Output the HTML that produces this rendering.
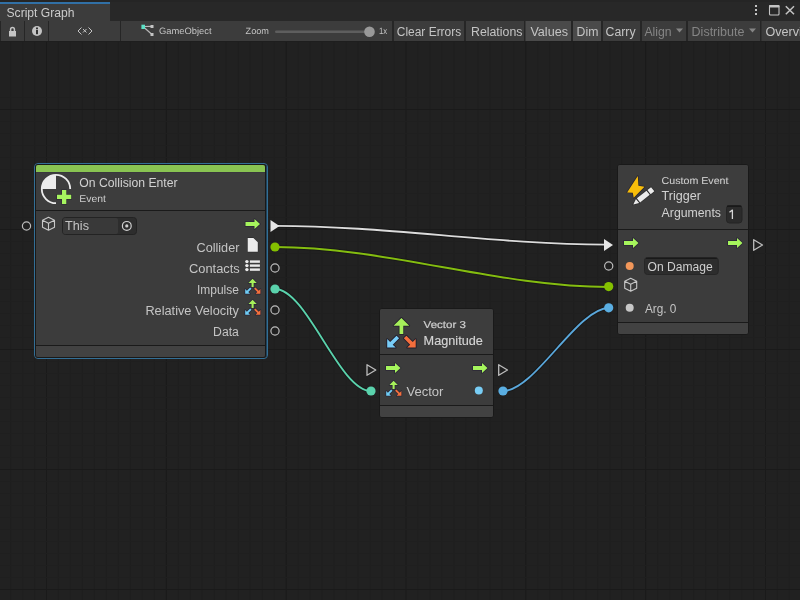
<!DOCTYPE html>
<html><head><meta charset="utf-8"><title>Script Graph</title>
<style>
*{margin:0;padding:0;box-sizing:border-box}
html,body{width:800px;height:600px;overflow:hidden;background:#222;font-family:"Liberation Sans", sans-serif}
#root{position:absolute;left:0;top:0;width:800px;height:600px;overflow:hidden;background:#222;will-change:transform}
.a{position:absolute}
#canvas{position:absolute;left:0;top:42px;width:800px;height:558px;background-color:#212121}
svg text{font-family:"Liberation Sans", sans-serif}
</style></head><body>
<div id="root">
<div id="canvas"><svg class="a" style="left:0;top:0" width="800" height="558"><rect x="10.05" y="0" width="1" height="558" fill="#1f1f1f"/>
<rect x="22.03" y="0" width="1" height="558" fill="#1f1f1f"/>
<rect x="34.02" y="0" width="1" height="558" fill="#1f1f1f"/>
<rect x="46.0" y="0" width="1" height="558" fill="#1a1a1a"/>
<rect x="57.98" y="0" width="1" height="558" fill="#1f1f1f"/>
<rect x="69.97" y="0" width="1" height="558" fill="#1f1f1f"/>
<rect x="81.95" y="0" width="1" height="558" fill="#1f1f1f"/>
<rect x="93.93" y="0" width="1" height="558" fill="#1f1f1f"/>
<rect x="105.92" y="0" width="1" height="558" fill="#1f1f1f"/>
<rect x="117.9" y="0" width="1" height="558" fill="#1f1f1f"/>
<rect x="129.88" y="0" width="1" height="558" fill="#1f1f1f"/>
<rect x="141.87" y="0" width="1" height="558" fill="#1f1f1f"/>
<rect x="153.85" y="0" width="1" height="558" fill="#1f1f1f"/>
<rect x="165.83" y="0" width="1" height="558" fill="#1a1a1a"/>
<rect x="177.82" y="0" width="1" height="558" fill="#1f1f1f"/>
<rect x="189.8" y="0" width="1" height="558" fill="#1f1f1f"/>
<rect x="201.78" y="0" width="1" height="558" fill="#1f1f1f"/>
<rect x="213.77" y="0" width="1" height="558" fill="#1f1f1f"/>
<rect x="225.75" y="0" width="1" height="558" fill="#1f1f1f"/>
<rect x="237.73" y="0" width="1" height="558" fill="#1f1f1f"/>
<rect x="249.72" y="0" width="1" height="558" fill="#1f1f1f"/>
<rect x="261.7" y="0" width="1" height="558" fill="#1f1f1f"/>
<rect x="273.68" y="0" width="1" height="558" fill="#1f1f1f"/>
<rect x="285.67" y="0" width="1" height="558" fill="#1a1a1a"/>
<rect x="297.65" y="0" width="1" height="558" fill="#1f1f1f"/>
<rect x="309.63" y="0" width="1" height="558" fill="#1f1f1f"/>
<rect x="321.62" y="0" width="1" height="558" fill="#1f1f1f"/>
<rect x="333.6" y="0" width="1" height="558" fill="#1f1f1f"/>
<rect x="345.58" y="0" width="1" height="558" fill="#1f1f1f"/>
<rect x="357.57" y="0" width="1" height="558" fill="#1f1f1f"/>
<rect x="369.55" y="0" width="1" height="558" fill="#1f1f1f"/>
<rect x="381.53" y="0" width="1" height="558" fill="#1f1f1f"/>
<rect x="393.52" y="0" width="1" height="558" fill="#1f1f1f"/>
<rect x="405.5" y="0" width="1" height="558" fill="#1a1a1a"/>
<rect x="417.48" y="0" width="1" height="558" fill="#1f1f1f"/>
<rect x="429.47" y="0" width="1" height="558" fill="#1f1f1f"/>
<rect x="441.45" y="0" width="1" height="558" fill="#1f1f1f"/>
<rect x="453.43" y="0" width="1" height="558" fill="#1f1f1f"/>
<rect x="465.42" y="0" width="1" height="558" fill="#1f1f1f"/>
<rect x="477.4" y="0" width="1" height="558" fill="#1f1f1f"/>
<rect x="489.38" y="0" width="1" height="558" fill="#1f1f1f"/>
<rect x="501.37" y="0" width="1" height="558" fill="#1f1f1f"/>
<rect x="513.35" y="0" width="1" height="558" fill="#1f1f1f"/>
<rect x="525.33" y="0" width="1" height="558" fill="#1a1a1a"/>
<rect x="537.32" y="0" width="1" height="558" fill="#1f1f1f"/>
<rect x="549.3" y="0" width="1" height="558" fill="#1f1f1f"/>
<rect x="561.28" y="0" width="1" height="558" fill="#1f1f1f"/>
<rect x="573.27" y="0" width="1" height="558" fill="#1f1f1f"/>
<rect x="585.25" y="0" width="1" height="558" fill="#1f1f1f"/>
<rect x="597.23" y="0" width="1" height="558" fill="#1f1f1f"/>
<rect x="609.22" y="0" width="1" height="558" fill="#1f1f1f"/>
<rect x="621.2" y="0" width="1" height="558" fill="#1f1f1f"/>
<rect x="633.18" y="0" width="1" height="558" fill="#1f1f1f"/>
<rect x="645.17" y="0" width="1" height="558" fill="#1a1a1a"/>
<rect x="657.15" y="0" width="1" height="558" fill="#1f1f1f"/>
<rect x="669.13" y="0" width="1" height="558" fill="#1f1f1f"/>
<rect x="681.12" y="0" width="1" height="558" fill="#1f1f1f"/>
<rect x="693.1" y="0" width="1" height="558" fill="#1f1f1f"/>
<rect x="705.08" y="0" width="1" height="558" fill="#1f1f1f"/>
<rect x="717.07" y="0" width="1" height="558" fill="#1f1f1f"/>
<rect x="729.05" y="0" width="1" height="558" fill="#1f1f1f"/>
<rect x="741.03" y="0" width="1" height="558" fill="#1f1f1f"/>
<rect x="753.02" y="0" width="1" height="558" fill="#1f1f1f"/>
<rect x="765.0" y="0" width="1" height="558" fill="#1a1a1a"/>
<rect x="776.98" y="0" width="1" height="558" fill="#1f1f1f"/>
<rect x="788.97" y="0" width="1" height="558" fill="#1f1f1f"/>
<rect x="0" y="55" width="800" height="1" fill="#1f1f1f"/>
<rect x="0" y="67" width="800" height="1" fill="#1a1a1a"/>
<rect x="0" y="79" width="800" height="1" fill="#1f1f1f"/>
<rect x="0" y="91" width="800" height="1" fill="#1f1f1f"/>
<rect x="0" y="103" width="800" height="1" fill="#1f1f1f"/>
<rect x="0" y="115" width="800" height="1" fill="#1f1f1f"/>
<rect x="0" y="127" width="800" height="1" fill="#1f1f1f"/>
<rect x="0" y="139" width="800" height="1" fill="#1f1f1f"/>
<rect x="0" y="151" width="800" height="1" fill="#1f1f1f"/>
<rect x="0" y="163" width="800" height="1" fill="#1f1f1f"/>
<rect x="0" y="175" width="800" height="1" fill="#1f1f1f"/>
<rect x="0" y="187" width="800" height="1" fill="#1a1a1a"/>
<rect x="0" y="199" width="800" height="1" fill="#1f1f1f"/>
<rect x="0" y="211" width="800" height="1" fill="#1f1f1f"/>
<rect x="0" y="223" width="800" height="1" fill="#1f1f1f"/>
<rect x="0" y="235" width="800" height="1" fill="#1f1f1f"/>
<rect x="0" y="247" width="800" height="1" fill="#1f1f1f"/>
<rect x="0" y="259" width="800" height="1" fill="#1f1f1f"/>
<rect x="0" y="271" width="800" height="1" fill="#1f1f1f"/>
<rect x="0" y="283" width="800" height="1" fill="#1f1f1f"/>
<rect x="0" y="295" width="800" height="1" fill="#1f1f1f"/>
<rect x="0" y="307" width="800" height="1" fill="#1a1a1a"/>
<rect x="0" y="319" width="800" height="1" fill="#1f1f1f"/>
<rect x="0" y="331" width="800" height="1" fill="#1f1f1f"/>
<rect x="0" y="343" width="800" height="1" fill="#1f1f1f"/>
<rect x="0" y="355" width="800" height="1" fill="#1f1f1f"/>
<rect x="0" y="367" width="800" height="1" fill="#1f1f1f"/>
<rect x="0" y="379" width="800" height="1" fill="#1f1f1f"/>
<rect x="0" y="391" width="800" height="1" fill="#1f1f1f"/>
<rect x="0" y="403" width="800" height="1" fill="#1f1f1f"/>
<rect x="0" y="415" width="800" height="1" fill="#1f1f1f"/>
<rect x="0" y="427" width="800" height="1" fill="#1a1a1a"/>
<rect x="0" y="439" width="800" height="1" fill="#1f1f1f"/>
<rect x="0" y="451" width="800" height="1" fill="#1f1f1f"/>
<rect x="0" y="463" width="800" height="1" fill="#1f1f1f"/>
<rect x="0" y="475" width="800" height="1" fill="#1f1f1f"/>
<rect x="0" y="487" width="800" height="1" fill="#1f1f1f"/>
<rect x="0" y="499" width="800" height="1" fill="#1f1f1f"/>
<rect x="0" y="511" width="800" height="1" fill="#1f1f1f"/>
<rect x="0" y="523" width="800" height="1" fill="#1f1f1f"/>
<rect x="0" y="535" width="800" height="1" fill="#1f1f1f"/>
<rect x="0" y="547" width="800" height="1" fill="#1a1a1a"/></svg></div>
<svg class="a" style="left:0;top:0" width="800" height="42" viewBox="0 0 800 42">
<rect x="0" y="0" width="800" height="21" fill="#282828"/>
<rect x="0" y="0" width="800" height="2" fill="#252525"/>
<rect x="0" y="2" width="110" height="19" fill="#3c3c3c"/>
<rect x="0" y="2" width="110" height="2" fill="#3170a6"/>
<text x="6.5" y="17" font-size="12" fill="#cbcbcb" textLength="68" lengthAdjust="spacingAndGlyphs">Script Graph</text>
<rect x="755" y="5" width="2" height="2" fill="#c4c4c4"/><rect x="755" y="9" width="2" height="2" fill="#c4c4c4"/><rect x="755" y="13" width="2" height="2" fill="#c4c4c4"/>
<rect x="769.5" y="5.5" width="9.5" height="9.5" rx="1" fill="none" stroke="#c4c4c4" stroke-width="1.1"/><rect x="769" y="5" width="10.5" height="2.6" rx="0.8" fill="#c4c4c4"/>
<path d="M785.8 6.2 L794 14.2 M794 6.2 L785.8 14.2" stroke="#c4c4c4" stroke-width="1.5"/>
<rect x="0" y="21" width="800" height="20" fill="#3c3c3c"/>
<rect x="0" y="41" width="800" height="1" fill="#1e1e1e"/>
<rect x="525" y="21" width="46" height="20" fill="#4a4a4a"/>
<rect x="573" y="21" width="28" height="20" fill="#4a4a4a"/>
<rect x="0" y="21" width="1" height="20" fill="#262626"/>
<rect x="24" y="21" width="1" height="20" fill="#262626"/>
<rect x="48" y="21" width="1" height="20" fill="#262626"/>
<rect x="120" y="21" width="1" height="20" fill="#262626"/>
<rect x="392" y="21" width="2" height="20" fill="#262626"/>
<rect x="464" y="21" width="2" height="20" fill="#262626"/>
<rect x="524" y="21" width="1.5" height="20" fill="#262626"/>
<rect x="571" y="21" width="2" height="20" fill="#262626"/>
<rect x="601" y="21" width="2" height="20" fill="#262626"/>
<rect x="640" y="21" width="2" height="20" fill="#262626"/>
<rect x="686" y="21" width="2" height="20" fill="#262626"/>
<rect x="760" y="21" width="1.5" height="20" fill="#262626"/>
<rect x="9" y="31" width="7" height="5.5" fill="#c4c4c4"/>
<path d="M10.6 31.5 V29.3 A1.9 1.9 0 0 1 14.4 29.3 V31.5" fill="none" stroke="#c4c4c4" stroke-width="1.5"/>
<circle cx="37" cy="31" r="5" fill="#c4c4c4"/><rect x="36" y="27.5" width="2" height="1.6" fill="#333"/><rect x="36" y="29.8" width="2" height="4.4" fill="#333"/>
<path d="M81.5 27.5 L78 31 L81.5 34.5 M88.5 27.5 L92 31 L88.5 34.5 M83 29 L86.5 32.5 M86.5 29 L83 32.5" fill="none" stroke="#c4c4c4" stroke-width="1"/>
<path d="M143 26.5 L152 26.3 M143 26.5 L152 34.5" stroke="#b8b8b8" stroke-width="1.2"/>
<rect x="150.5" y="25" width="3" height="3" fill="#c4c4c4"/><rect x="150.5" y="33" width="3" height="3" fill="#c4c4c4"/>
<rect x="141.4" y="24.7" width="3.6" height="4.3" fill="#5de0c6"/>
<text x="159" y="34" font-size="9.2" fill="#c4c4c4" text-rendering="geometricPrecision" textLength="52.6" lengthAdjust="spacingAndGlyphs">GameObject</text>
<text x="245.6" y="34" font-size="9.2" fill="#c4c4c4" text-rendering="geometricPrecision" textLength="23.4" lengthAdjust="spacingAndGlyphs">Zoom</text>
<rect x="275" y="30.5" width="93" height="2.6" rx="1.3" fill="#5e5e5e"/>
<circle cx="369.5" cy="31.8" r="5.3" fill="#999"/>
<text x="379" y="34" font-size="9.2" fill="#c4c4c4" text-rendering="geometricPrecision" textLength="8.2" lengthAdjust="spacingAndGlyphs">1x</text>
<text x="396.8" y="36" font-size="12" fill="#c4c4c4" textLength="64.4" lengthAdjust="spacingAndGlyphs">Clear Errors</text>
<text x="471" y="36" font-size="12" fill="#c4c4c4" textLength="51.4" lengthAdjust="spacingAndGlyphs">Relations</text>
<text x="530.4" y="36" font-size="12" fill="#c4c4c4" textLength="37.6" lengthAdjust="spacingAndGlyphs">Values</text>
<text x="576.6" y="36" font-size="12" fill="#c4c4c4" textLength="21.8" lengthAdjust="spacingAndGlyphs">Dim</text>
<text x="605.6" y="36" font-size="12" fill="#c4c4c4" textLength="30" lengthAdjust="spacingAndGlyphs">Carry</text>
<text x="644.4" y="36" font-size="12" fill="#858585" textLength="27.2" lengthAdjust="spacingAndGlyphs">Align</text>
<text x="691.6" y="36" font-size="12" fill="#858585" textLength="52.8" lengthAdjust="spacingAndGlyphs">Distribute</text>
<text x="765.5" y="36" font-size="12" fill="#c4c4c4" textLength="52.4" lengthAdjust="spacingAndGlyphs">Overview</text>
<path d="M676 28.5 L683 28.5 L679.5 32.5 Z" fill="#858585"/><path d="M749 28.5 L756 28.5 L752.5 32.5 Z" fill="#858585"/>
</svg>
<div class="a" style="left:34px;top:163px;width:234px;height:196px;border:1px solid #336f96;border-radius:4px"></div><div class="a" style="left:266px;top:166px;width:1px;height:190px;background:#21435a"></div><div class="a" style="left:35px;top:164px;width:231px;height:194px;background:#3c3c3c;border:1px solid #191919;border-radius:3px;overflow:hidden"><div class="a" style="left:0;top:0;width:100%;height:45px;background:#3d3d3d"></div><div class="a" style="left:0;top:45px;width:100%;height:1px;background:#1a1a1a"></div><div class="a" style="left:0;top:180px;width:100%;height:1px;background:#1a1a1a"></div><div class="a" style="left:0;top:181px;width:100%;height:11px;background:#424242"></div><div class="a" style="left:0;top:0;width:100%;height:7px;background:#89c452"></div><div class="a" style="left:0;top:7px;width:100%;height:1px;background:#39383d"></div></div>
<div class="a" style="left:617px;top:164px;width:132px;height:171px;background:#3c3c3c;border:1px solid #191919;border-radius:3px;overflow:hidden"><div class="a" style="left:0;top:0;width:100%;height:64px;background:#3d3d3d"></div><div class="a" style="left:0;top:64px;width:100%;height:1px;background:#1a1a1a"></div><div class="a" style="left:0;top:157px;width:100%;height:1px;background:#1a1a1a"></div><div class="a" style="left:0;top:158px;width:100%;height:11px;background:#424242"></div></div>
<div class="a" style="left:379px;top:308px;width:115px;height:110px;background:#3c3c3c;border:1px solid #191919;border-radius:3px;overflow:hidden"><div class="a" style="left:0;top:0;width:100%;height:45px;background:#3d3d3d"></div><div class="a" style="left:0;top:45px;width:100%;height:1px;background:#1a1a1a"></div><div class="a" style="left:0;top:96px;width:100%;height:1px;background:#1a1a1a"></div><div class="a" style="left:0;top:97px;width:100%;height:11px;background:#424242"></div></div>
<svg class="a" style="left:0;top:0" width="800" height="600" viewBox="0 0 800 600">
<path d="M276 225.8 C386 225.8 496 244.6 606 244.6" fill="none" stroke="#151515" stroke-opacity="0.7" stroke-width="3.8"/><path d="M276 225.8 C386 225.8 496 244.6 606 244.6" fill="none" stroke="#dcdcdc" stroke-width="1.8"/>
<path d="M275 247 C385 247 499 287 609 287" fill="none" stroke="#151515" stroke-opacity="0.7" stroke-width="3.8"/><path d="M275 247 C385 247 499 287 609 287" fill="none" stroke="#84bd10" stroke-width="1.8"/>
<path d="M275 289 C307 289 339 391 371 391" fill="none" stroke="#151515" stroke-opacity="0.7" stroke-width="3.8"/><path d="M275 289 C307 289 339 391 371 391" fill="none" stroke="#5ad2ac" stroke-width="1.8"/>
<path d="M503 391 C535 391 577 308 609 308" fill="none" stroke="#151515" stroke-opacity="0.7" stroke-width="3.8"/><path d="M503 391 C535 391 577 308 609 308" fill="none" stroke="#5aa8dc" stroke-width="1.8"/>
<path d="M56 189 V174.9 A14.1 14.1 0 0 0 41.9 189 Z" fill="#ececec"/>
<path d="M70.2 189 A14.2 14.2 0 1 0 56 203.2" fill="none" stroke="#ececec" stroke-width="1.8"/>
<path d="M62 190 H66.3 V194.8 H71.2 V198.9 H66.3 V204 H62 V198.9 H57 V194.8 H62 Z" fill="#a6f55f" stroke="#2f2f33" stroke-width="1.5" paint-order="stroke"/>
<text x="79.3" y="187" font-size="12" fill="#d2d2d2" textLength="98.3" lengthAdjust="spacingAndGlyphs">On Collision Enter</text>
<text x="79.3" y="201.9" font-size="10" fill="#cccccc" text-rendering="geometricPrecision" textLength="26.7" lengthAdjust="spacingAndGlyphs">Event</text>
<circle cx="26.5" cy="226" r="4.1" fill="none" stroke="#bdbdbd" stroke-width="1.2"/>
<path d="M48.5 217.3 L54.5 220.3 L54.5 227.3 L48.5 230.3 L42.5 227.3 L42.5 220.3 Z M42.5 220.3 L48.5 223.3 L54.5 220.3 M48.5 223.3 V230.3" fill="none" stroke="#c8c8c8" stroke-width="1.1" stroke-linejoin="round"/>
<rect x="62.5" y="217.5" width="74" height="17" rx="3" fill="#2d2d2d" stroke="#232323" stroke-width="1"/>
<rect x="63" y="218" width="55" height="16" rx="2" fill="#393939"/>
<circle cx="126.8" cy="225.9" r="4.4" fill="none" stroke="#d0d0d0" stroke-width="1.2"/><circle cx="126.8" cy="225.9" r="1.6" fill="#d0d0d0"/>
<text x="65.1" y="230" font-size="12" fill="#c4c4c4" textLength="23.9" lengthAdjust="spacingAndGlyphs">This</text>
<path d="M245.5 222 H254.5 V219 L260.0 224 L254.5 229 V226 H245.5 Z" fill="#a6f55c" stroke="#2a2636" stroke-width="1.6" paint-order="stroke" stroke-linejoin="round"/>
<path d="M270.5 220 L279.5 226 L270.5 232 Z" fill="#e6e6e6"/>
<text x="239.4" y="252" font-size="12" fill="#c4c4c4" text-anchor="end" textLength="42.9" lengthAdjust="spacingAndGlyphs">Collider</text>
<path d="M247.7 237.9 H253.4 L257.8 242.2 V251.8 H247.7 Z" fill="#ececec" stroke="#2a2a2a" stroke-width="1" paint-order="stroke"/>
<circle cx="275" cy="247" r="4.6" fill="#84c000"/>
<text x="239.8" y="273" font-size="12" fill="#c4c4c4" text-anchor="end" textLength="50.8" lengthAdjust="spacingAndGlyphs">Contacts</text>
<g fill="#ececec"><circle cx="246.9" cy="261.6" r="1.7"/><circle cx="246.9" cy="265.6" r="1.7"/><circle cx="246.9" cy="269.6" r="1.7"/><rect x="249.9" y="260.4" width="10" height="2.4"/><rect x="249.9" y="264.4" width="10" height="2.4"/><rect x="249.9" y="268.4" width="10" height="2.4"/></g>
<circle cx="275" cy="268" r="4.1" fill="none" stroke="#bdbdbd" stroke-width="1.2"/>
<text x="238.9" y="294" font-size="12" fill="#c4c4c4" text-anchor="end" textLength="41.9" lengthAdjust="spacingAndGlyphs">Impulse</text>
<path transform="translate(252.6,278.8) rotate(-90)" d="M0 0 L-4.2 -4.2 V-1.05 H-8.1 V1.05 H-4.2 V4.2 Z" fill="#a6f05a" stroke="#2a2636" stroke-width="1.4" paint-order="stroke" stroke-linejoin="round"/><path transform="translate(245.2,293.8) rotate(135)" d="M0 0 L-3.4 -3.4 V-1.0 H-8.0 V1.0 H-3.4 V3.4 Z" fill="#6fcdf5" stroke="#2a2636" stroke-width="1.4" paint-order="stroke" stroke-linejoin="round"/><path transform="translate(260.4,293.8) rotate(45)" d="M0 0 L-3.4 -3.4 V-1.0 H-8.0 V1.0 H-3.4 V3.4 Z" fill="#f4703c" stroke="#2a2636" stroke-width="1.4" paint-order="stroke" stroke-linejoin="round"/>
<circle cx="275" cy="289" r="4.6" fill="#5ad2ac"/>
<text x="238.9" y="315" font-size="12" fill="#c4c4c4" text-anchor="end" textLength="93.5" lengthAdjust="spacingAndGlyphs">Relative Velocity</text>
<path transform="translate(252.6,299.8) rotate(-90)" d="M0 0 L-4.2 -4.2 V-1.05 H-8.1 V1.05 H-4.2 V4.2 Z" fill="#a6f05a" stroke="#2a2636" stroke-width="1.4" paint-order="stroke" stroke-linejoin="round"/><path transform="translate(245.2,314.8) rotate(135)" d="M0 0 L-3.4 -3.4 V-1.0 H-8.0 V1.0 H-3.4 V3.4 Z" fill="#6fcdf5" stroke="#2a2636" stroke-width="1.4" paint-order="stroke" stroke-linejoin="round"/><path transform="translate(260.4,314.8) rotate(45)" d="M0 0 L-3.4 -3.4 V-1.0 H-8.0 V1.0 H-3.4 V3.4 Z" fill="#f4703c" stroke="#2a2636" stroke-width="1.4" paint-order="stroke" stroke-linejoin="round"/>
<circle cx="275" cy="310" r="4.1" fill="none" stroke="#bdbdbd" stroke-width="1.2"/>
<text x="238.9" y="336" font-size="12" fill="#c4c4c4" text-anchor="end" textLength="25.8" lengthAdjust="spacingAndGlyphs">Data</text>
<circle cx="275" cy="331" r="4.1" fill="none" stroke="#bdbdbd" stroke-width="1.2"/>
<path d="M637.8 175.9 L627.1 192.4 L632.8 192.7 L633.7 197.8 L644.5 186.7 L638.4 185.8 Z" fill="#f8be0a" stroke="#2a2630" stroke-width="1.4" paint-order="stroke" stroke-linejoin="round"/>
<g transform="translate(633.3,204.4) rotate(-38)" stroke="#2e2e2e" stroke-width="1.4" paint-order="stroke" fill="#ececec"><path d="M0 0 L5.4 -2.6 L5.4 2.6 Z"/><rect x="6.6" y="-2.6" width="12.2" height="5.2"/><rect x="20" y="-2.6" width="4.6" height="5.2"/></g>
<text x="661.6" y="183.8" font-size="10" fill="#cfcfcf" text-rendering="geometricPrecision" textLength="66.9" lengthAdjust="spacingAndGlyphs" stroke="#cfcfcf" stroke-width="0.06">Custom Event</text>
<text x="661.6" y="200" font-size="12" fill="#d2d2d2" textLength="39.4" lengthAdjust="spacingAndGlyphs">Trigger</text>
<text x="661.6" y="217.3" font-size="12" fill="#d2d2d2" textLength="59.4" lengthAdjust="spacingAndGlyphs">Arguments</text>
<rect x="726.5" y="205.5" width="15.5" height="17.5" rx="3" fill="#2b2b2b" stroke="#252525"/>
<rect x="727" y="205.6" width="14.3" height="1.2" fill="#161616"/><path d="M729.5 212.3 L732.4 210.1 V219" fill="none" stroke="#d8d8d8" stroke-width="1.3" stroke-linejoin="round"/>
<path d="M604 239 L613 245 L604 251 Z" fill="#e6e6e6"/>
<path d="M624 241 H633 V238 L638.5 243 L633 248 V245 H624 Z" fill="#a6f55c" stroke="#2a2636" stroke-width="1.6" paint-order="stroke" stroke-linejoin="round"/>
<path d="M728 241 H737 V238 L742.5 243 L737 248 V245 H728 Z" fill="#a6f55c" stroke="#2a2636" stroke-width="1.6" paint-order="stroke" stroke-linejoin="round"/>
<path d="M753.7 239.7 L762.5 245 L753.7 250.3 Z" fill="none" stroke="#bdbdbd" stroke-width="1.3" stroke-linejoin="round"/>
<circle cx="608.7" cy="266" r="4.1" fill="none" stroke="#bdbdbd" stroke-width="1.2"/>
<circle cx="629.7" cy="266" r="4" fill="#f2975a"/>
<rect x="644.5" y="257.5" width="73.8" height="17" rx="3" fill="#2d2d2d" stroke="#262626"/><rect x="646" y="257.8" width="70.8" height="1.2" fill="#191919"/>
<text x="647.5" y="271.2" font-size="12" fill="#cfcfcf" textLength="65.2" lengthAdjust="spacingAndGlyphs">On Damage</text>
<circle cx="608.7" cy="286.6" r="4.6" fill="#84c000"/>
<path d="M630.7 278.3 L636.7 281.3 L636.7 288.3 L630.7 291.3 L624.7 288.3 L624.7 281.3 Z M624.7 281.3 L630.7 284.3 L636.7 281.3 M630.7 284.3 V291.3" fill="none" stroke="#c8c8c8" stroke-width="1.1" stroke-linejoin="round"/>
<circle cx="608.7" cy="307.8" r="4.6" fill="#5aaee2"/>
<circle cx="629.7" cy="307.8" r="4" fill="#c8c8c8"/>
<text x="644.9" y="312.8" font-size="12" fill="#c4c4c4" textLength="31.5" lengthAdjust="spacingAndGlyphs">Arg. 0</text>
<path transform="translate(401.4,317.9) rotate(-90)" d="M0 0 L-7.8 -7.9 V-1.9 H-16.1 V1.9 H-7.8 V7.9 Z" fill="#a6f05a" stroke="#231f2c" stroke-width="1.6" paint-order="stroke" stroke-linejoin="round"/><path transform="translate(387.2,347.6) rotate(135)" d="M0 0 L-6.0 -6.0 V-1.8 H-15.0 V1.8 H-6.0 V6.0 Z" fill="#78cdf8" stroke="#231f2c" stroke-width="1.8" paint-order="stroke" stroke-linejoin="round"/><path transform="translate(415.7,347.6) rotate(45)" d="M0 0 L-6.0 -6.0 V-1.8 H-15.0 V1.8 H-6.0 V6.0 Z" fill="#f46e3c" stroke="#231f2c" stroke-width="1.8" paint-order="stroke" stroke-linejoin="round"/>
<text x="423.6" y="328" font-size="10" fill="#cfcfcf" text-rendering="geometricPrecision" textLength="42.3" lengthAdjust="spacingAndGlyphs" stroke="#cfcfcf" stroke-width="0.2">Vector 3</text>
<text x="423.6" y="344.8" font-size="12" fill="#d4d4d4" textLength="59.3" lengthAdjust="spacingAndGlyphs" stroke="#d4d4d4" stroke-width="0.15">Magnitude</text>
<path d="M367.0 364.7 L375.8 370 L367.0 375.3 Z" fill="none" stroke="#bdbdbd" stroke-width="1.3" stroke-linejoin="round"/>
<path d="M386 366 H395 V363 L400.5 368 L395 373 V370 H386 Z" fill="#a6f55c" stroke="#2a2636" stroke-width="1.6" paint-order="stroke" stroke-linejoin="round"/>
<path d="M473 366 H482 V363 L487.5 368 L482 373 V370 H473 Z" fill="#a6f55c" stroke="#2a2636" stroke-width="1.6" paint-order="stroke" stroke-linejoin="round"/>
<path d="M498.7 364.7 L507.5 370 L498.7 375.3 Z" fill="none" stroke="#bdbdbd" stroke-width="1.3" stroke-linejoin="round"/>
<circle cx="371" cy="391" r="4.6" fill="#5ad2ac"/>
<path transform="translate(393.6,380.8) rotate(-90)" d="M0 0 L-4.2 -4.2 V-1.05 H-8.1 V1.05 H-4.2 V4.2 Z" fill="#a6f05a" stroke="#2a2636" stroke-width="1.4" paint-order="stroke" stroke-linejoin="round"/><path transform="translate(386.2,395.8) rotate(135)" d="M0 0 L-3.4 -3.4 V-1.0 H-8.0 V1.0 H-3.4 V3.4 Z" fill="#6fcdf5" stroke="#2a2636" stroke-width="1.4" paint-order="stroke" stroke-linejoin="round"/><path transform="translate(401.4,395.8) rotate(45)" d="M0 0 L-3.4 -3.4 V-1.0 H-8.0 V1.0 H-3.4 V3.4 Z" fill="#f4703c" stroke="#2a2636" stroke-width="1.4" paint-order="stroke" stroke-linejoin="round"/>
<text x="406.4" y="396" font-size="12" fill="#c4c4c4" textLength="37.1" lengthAdjust="spacingAndGlyphs">Vector</text>
<circle cx="478.8" cy="390.6" r="4" fill="#78cdf5"/>
<circle cx="503" cy="391" r="4.6" fill="#5aaee2"/>
</svg>
</div>
</body></html>
